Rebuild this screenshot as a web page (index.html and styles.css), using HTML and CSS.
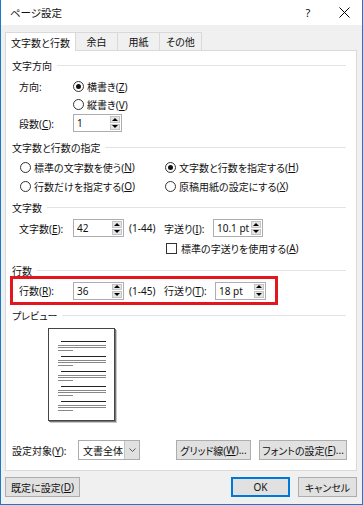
FILE: index.html
```html
<!doctype html>
<html lang="ja">
<head>
    <meta charset="utf-8">
    <title>ページ設定</title>
    <link rel="stylesheet" href="styles.css">
</head>
<body>
	<div class="ventana">
		<div class="barra">
			<span class="titulo">ページ設定</span>
			<span class="ayuda">?</span>
			<span class="cerrar">
				<svg width="11" height="11" viewBox="0 0 11 11"><path d="M0.5 0.5 L10.5 10.5 M10.5 0.5 L0.5 10.5" stroke="#000" stroke-width="1" fill="none"/></svg>
			</span>
		</div>

		<div class="cuerpo">
			<div class="pestanas">
				<span class="pestana activa">文字数と行数</span>
				<span class="pestana">余白</span>
				<span class="pestana">用紙</span>
				<span class="pestana">その他</span>
			</div>

			<div class="panel">
				<div class="cabecera c1">文字方向</div>
				<div class="fila f-dir">
					<span class="etiqueta">方向:</span>
					<span class="radio marcado"></span><span>横書き(<u>Z</u>)</span>
				</div>
				<div class="fila">
					<span class="etiqueta"></span>
					<span class="radio"></span><span>縦書き(<u>V</u>)</span>
				</div>
				<div class="fila f-col">
					<span class="etiqueta">段数(<u>C</u>):</span>
					<span class="spin ancho49"><span class="valor">1</span><span class="flechas"><i class="arriba"></i><i class="abajo"></i></span></span>
				</div>

				<div class="cabecera c2">文字数と行数の指定</div>
				<div class="fila f-op1">
					<span class="opcion"><span class="radio"></span>標準の文字数を使う(<u>N</u>)</span>
					<span class="opcion"><span class="radio marcado"></span>文字数と行数を指定する(<u>H</u>)</span>
				</div>
				<div class="fila f-op2">
					<span class="opcion"><span class="radio"></span>行数だけを指定する(<u>O</u>)</span>
					<span class="opcion"><span class="radio"></span>原稿用紙の設定にする(<u>X</u>)</span>
				</div>

				<div class="cabecera c3">文字数</div>
				<div class="fila f-num">
					<span class="etiqueta">文字数(<u>E</u>):</span>
					<span class="spin ancho51"><span class="valor">42</span><span class="flechas"><i class="arriba"></i><i class="abajo"></i></span></span>
					<span class="rango">(1-44)</span>
					<span class="etiqueta2">字送り(<u>I</u>):</span>
					<span class="spin ancho50"><span class="valor">10.1 pt</span><span class="flechas"><i class="arriba"></i><i class="abajo"></i></span></span>
				</div>
				<div class="fila f-chk">
					<span class="check"></span>標準の字送りを使用する(<u>A</u>)
				</div>

				<div class="cabecera c4">行数</div>
				<div class="marco">
					<span class="etiqueta">行数(<u>R</u>):</span>
					<span class="spin ancho51"><span class="valor">36</span><span class="flechas"><i class="arriba"></i><i class="abajo"></i></span></span>
					<span class="rango">(1-45)</span>
					<span class="etiqueta3">行送り(<u>T</u>):</span>
					<span class="spin ancho51"><span class="valor">18 pt</span><span class="flechas"><i class="arriba"></i><i class="abajo"></i></span></span>
				</div>

				<div class="cabecera c5">プレビュー</div>
				<div class="hoja">
					<div class="grupo"><div class="l1"></div><div class="l2"></div><div class="l3"></div><div class="l4"></div></div>
					<div class="grupo"><div class="l1"></div><div class="l2"></div><div class="l3"></div><div class="l4"></div></div>
					<div class="grupo"><div class="l1"></div><div class="l2"></div><div class="l3"></div><div class="l4"></div></div>
					<div class="grupo"><div class="l1"></div><div class="l2"></div><div class="l3"></div><div class="l4"></div></div>
					<div class="grupo"><div class="l1"></div><div class="l2"></div><div class="l3"></div><div class="l4"></div></div>
				</div>

				<div class="fila-objeto">
					<span class="etiqueta-obj">設定対象(<u>Y</u>):</span>
					<span class="combo"><span class="valor">文書全体</span><span class="desplegar"><svg width="7" height="4" viewBox="0 0 7 4"><path d="M0.5 0.5 L3.5 3.5 L6.5 0.5" stroke="#555" fill="none"/></svg></span></span>
					<span class="boton b-grid">グリッド線(<u>W</u>)...</span>
					<span class="boton b-fuente">フォントの設定(<u>F</u>)...</span>
				</div>
			</div>

			<div class="pie">
				<span class="boton b-defecto">既定に設定(<u>D</u>)</span>
				<span class="boton b-ok">OK</span>
				<span class="boton b-cancelar">キャンセル</span>
			</div>
		</div>
	</div>
</body>
</html>
```

FILE: styles.css
```css
body{
	margin: 0;
	font-family: "Noto Sans", "Noto Sans CJK JP", sans-serif;
	font-size: 10px;
	color: #111;
	font-feature-settings: "palt";
}
u{
	text-underline-offset: 1px;
}
.ventana{
	width: 363px;
	height: 505px;
	box-sizing: border-box;
	border: 1px solid #1979ca;
	border-top: none;
	background-color: #f0f0f0;
	display: flex;
	flex-direction: column;
}
.barra{
	height: 25px;
	background-color: #fff;
	display: flex;
	align-items: center;
	padding-left: 9px;
}
.titulo{
	flex: 1;
	font-size: 10.5px;
}
.ayuda, .cerrar{
	width: 36px;
	display: flex;
	justify-content: center;
	align-items: center;
	font-size: 11px;
}
.cuerpo{
	padding: 7px 5px 0 4px;
}
.pestanas{
	display: flex;
	height: 18px;
}
.pestana{
	width: 43px;
	box-sizing: border-box;
	border: 1px solid #d9d9d9;
	border-bottom: none;
	margin-right: -1px;
	display: flex;
	justify-content: center;
	align-items: center;
}
.pestana.activa{
	width: 71px;
	background-color: #fff;
	position: relative;
	z-index: 1;
	height: 19px;
}
.panel{
	height: 421px;
	box-sizing: border-box;
	border: 1px solid #d9d9d9;
	background-color: #fff;
	display: flex;
	flex-direction: column;
}
.cabecera{
	display: flex;
	align-items: center;
	height: 16px;
	margin: 0 10px 0 6px;
}
.cabecera::after{
	content: "";
	flex: 1;
	border-top: 1px solid #e3e3e3;
	margin-left: 5px;
}
.c1{ margin-top: 6px; }
.c2{ margin-top: 7px; }
.c3{ margin-top: 4px; }
.c4{ margin-top: 7px; height: 12px; }
.c5{ margin-top: 4px; height: 12px; }

.fila{
	display: flex;
	align-items: center;
	height: 18px;
	padding-left: 13px;
}
.f-dir{ margin-top: 4px; }
.f-col{ margin-top: 1px; }
.f-op1{ margin-top: 3px; padding-left: 14px; }
.f-op2{ margin-top: 1px; padding-left: 14px; }
.f-num{ margin-top: 3px; height: 20px; }
.f-chk{ margin-top: 1px; padding-left: 160px; }
.etiqueta{
	width: 54px;
}
.etiqueta2{
	width: 49px;
}
.etiqueta3{
	width: 51px;
}
.rango{
	width: 35px;
	margin-left: 5px;
}
.opcion{
	width: 145px;
	display: flex;
	align-items: center;
}
.radio{
	width: 11px;
	height: 11px;
	box-sizing: border-box;
	border: 1px solid #333;
	border-radius: 50%;
	margin-right: 3px;
	display: flex;
	justify-content: center;
	align-items: center;
	flex: none;
}
.radio.marcado::after{
	content: "";
	width: 5px;
	height: 5px;
	border-radius: 50%;
	background-color: #111;
}
.check{
	width: 11px;
	height: 11px;
	box-sizing: border-box;
	border: 1px solid #333;
	margin-right: 4px;
}
.spin{
	height: 18px;
	box-sizing: border-box;
	border: 1px solid #abadb3;
	background-color: #fff;
	display: flex;
	align-items: stretch;
}
.ancho49{ width: 49px; }
.ancho50{ width: 50px; }
.ancho51{ width: 51px; }
.spin .valor{
	flex: 1;
	padding-left: 3px;
	display: flex;
	align-items: center;
	white-space: nowrap;
	overflow: hidden;
}
.flechas{
	width: 10px;
	margin: 1px;
	display: flex;
	flex-direction: column;
	gap: 1px;
}
.flechas i{
	flex: 1;
	background-color: #e5e5e5;
	border: 1px solid #c4c4c4;
	display: flex;
	justify-content: center;
	align-items: center;
}
.arriba::after{
	content: "";
	border-left: 3px solid transparent;
	border-right: 3px solid transparent;
	border-bottom: 3px solid #000;
}
.abajo::after{
	content: "";
	border-left: 3px solid transparent;
	border-right: 3px solid transparent;
	border-top: 3px solid #000;
}
.marco{
	width: 268px;
	height: 29px;
	box-sizing: border-box;
	border: 3px solid #e3161e;
	margin-left: 4px;
	padding-left: 6px;
	display: flex;
	align-items: center;
}
.hoja{
	width: 67px;
	height: 93px;
	box-sizing: border-box;
	border: 1px solid #444;
	margin: 7px 0 0 42px;
	padding-top: 12px;
	box-shadow: 1px 1px 0 #777, 2px 2px 0 #c8c8c8;
}
.grupo{
	margin-bottom: 5px;
}
.l1{
	height: 1px;
	width: 45px;
	margin-left: 12px;
	background-color: #222;
}
.l2, .l3, .l4{
	height: 1px;
	width: 48px;
	margin-left: 9px;
	background-color: #888;
}
.l2{ margin-top: 3px; }
.l3{ margin-top: 1px; }
.l4{ margin-top: 2px; width: 15px; }

.fila-objeto{
	display: flex;
	align-items: center;
	height: 20px;
	margin-top: 19px;
	padding-left: 6px;
}
.etiqueta-obj{
	width: 66px;
}
.combo{
	width: 62px;
	height: 20px;
	box-sizing: border-box;
	border: 1px solid #abadb3;
	display: flex;
}
.combo .valor{
	flex: 1;
	padding-left: 4px;
	display: flex;
	align-items: center;
	white-space: nowrap;
}
.desplegar{
	width: 14px;
	flex: none;
	background-color: #e1e1e1;
	border-left: 1px solid #c4c4c4;
	display: flex;
	justify-content: center;
	align-items: center;
}
.boton{
	height: 20px;
	box-sizing: border-box;
	border: 1px solid #adadad;
	background-color: #e1e1e1;
	display: flex;
	justify-content: center;
	align-items: center;
	white-space: nowrap;
}
.b-grid{
	width: 75px;
	margin-left: 36px;
}
.b-fuente{
	width: 88px;
	margin-left: 8px;
}
.pie{
	display: flex;
	margin-top: 6px;
}
.b-defecto{
	width: 75px;
	margin-right: auto;
}
.b-ok{
	width: 59px;
	border: 1px solid #0078d7;
	box-shadow: inset 0 0 0 1px #0078d7;
}
.b-cancelar{
	width: 59px;
	margin-left: 8px;
}
```
